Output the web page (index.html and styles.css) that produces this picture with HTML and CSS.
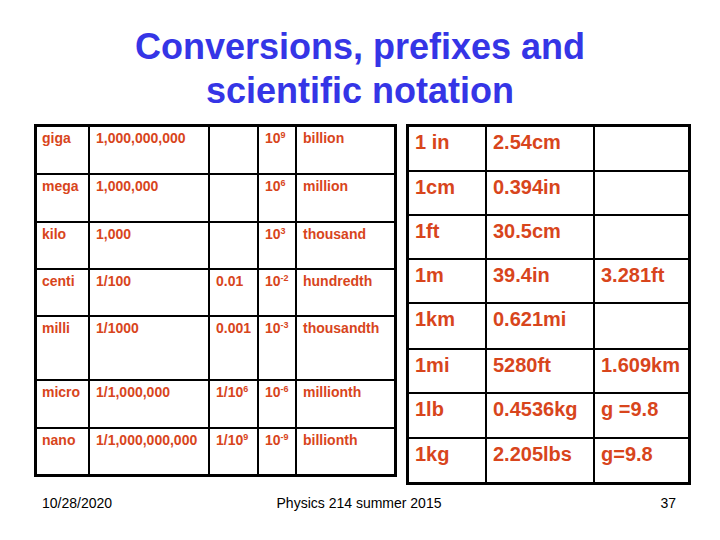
FILE: index.html
```html
<!DOCTYPE html>
<html lang="en">
<head>
<meta charset="utf-8">
<title>Conversions, prefixes and scientific notation</title>
<link rel="stylesheet" href="styles.css">
</head>
<body>
<div class="slide">
  <h1 class="title">Conversions, prefixes and<br>scientific notation</h1>
  <div class="tables">
    <table class="prefixes">
      <colgroup>
        <col class="c1"><col class="c2"><col class="c3"><col class="c4"><col class="c5">
      </colgroup>
      <tr><td>giga</td><td>1,000,000,000</td><td></td><td>10<sup>9</sup></td><td>billion</td></tr>
      <tr><td>mega</td><td>1,000,000</td><td></td><td>10<sup>6</sup></td><td>million</td></tr>
      <tr><td>kilo</td><td>1,000</td><td></td><td>10<sup>3</sup></td><td>thousand</td></tr>
      <tr><td>centi</td><td>1/100</td><td>0.01</td><td>10<sup>-2</sup></td><td>hundredth</td></tr>
      <tr><td>milli</td><td>1/1000</td><td>0.001</td><td>10<sup>-3</sup></td><td>thousandth</td></tr>
      <tr><td>micro</td><td>1/1,000,000</td><td>1/10<sup>6</sup></td><td>10<sup>-6</sup></td><td>millionth</td></tr>
      <tr><td>nano</td><td>1/1,000,000,000</td><td>1/10<sup>9</sup></td><td>10<sup>-9</sup></td><td>billionth</td></tr>
    </table>
    <table class="units">
      <colgroup>
        <col class="u1"><col class="u2"><col class="u3">
      </colgroup>
      <tr><td>1 in</td><td>2.54cm</td><td></td></tr>
      <tr><td>1cm</td><td>0.394in</td><td></td></tr>
      <tr><td>1ft</td><td>30.5cm</td><td></td></tr>
      <tr><td>1m</td><td>39.4in</td><td>3.281ft</td></tr>
      <tr><td>1km</td><td>0.621mi</td><td></td></tr>
      <tr><td>1mi</td><td>5280ft</td><td>1.609km</td></tr>
      <tr><td>1lb</td><td>0.4536kg</td><td>g =9.8</td></tr>
      <tr><td>1kg</td><td>2.205lbs</td><td>g=9.8</td></tr>
    </table>
  </div>
  <footer class="footer">
    <span class="date">10/28/2020</span>
    <span class="course">Physics 214 summer 2015</span>
    <span class="page">37</span>
  </footer>
</div>
</body>
</html>
```
FILE: styles.css
```css
html, body {
  margin: 0;
  padding: 0;
  background: #ffffff;
}

.slide {
  width: 720px;
  height: 540px;
  overflow: hidden;
  background: #ffffff;
  font-family: "Liberation Sans", Arial, sans-serif;
  padding-top: 25px;
  box-sizing: border-box;
}

.title {
  margin: 0;
  font-size: 36px;
  line-height: 44px;
  font-weight: bold;
  text-align: center;
  color: #3535e6;
}

.tables {
  display: flex;
  align-items: flex-start;
  gap: 9px;
  margin-top: 11px;
  padding-left: 34px;
}

table {
  border-collapse: collapse;
  table-layout: fixed;
  border: 3px solid #000;
  color: #d8451c;
  font-weight: bold;
}

td {
  border: 2px solid #000;
  vertical-align: top;
  padding: 0 2px 0 6px;
  white-space: nowrap;
  overflow: hidden;
}

.prefixes {
  width: 360px;
  font-size: 14px;
}

.prefixes td {
  padding-top: 3px;
}

.prefixes td:first-child {
  padding-left: 5px;
}

.c1 { width: 53.5px; }
.c2 { width: 120px; }
.c3 { width: 49px; }
.c4 { width: 38px; }
.c5 { width: 99.5px; }

.prefixes tr { height: 47px; }
.prefixes tr:nth-child(1),
.prefixes tr:nth-child(2),
.prefixes tr:nth-child(6),
.prefixes tr:nth-child(7) { height: 48px; }
.prefixes tr:nth-child(5) { height: 64px; }

sup {
  font-size: 9px;
  line-height: 0;
  vertical-align: 5px;
  font-weight: bold;
}

.units {
  width: 282px;
  font-size: 20px;
}

.units td {
  padding-top: 4px;
}

.u1 { width: 78.5px; }
.u2 { width: 108px; }
.u3 { width: 95.5px; }

.units tr { height: 44px; }
.units tr:nth-child(1),
.units tr:nth-child(7) { height: 45px; }
.units tr:nth-child(5),
.units tr:nth-child(8) { height: 46px; }

.footer {
  display: grid;
  grid-template-columns: 1fr auto 1fr;
  align-items: start;
  margin-top: 10px;
  padding: 0 44px 0 42px;
  font-size: 14px;
  color: #000;
}

.date { justify-self: start; }
.course { justify-self: center; }
.page { justify-self: end; }
```
